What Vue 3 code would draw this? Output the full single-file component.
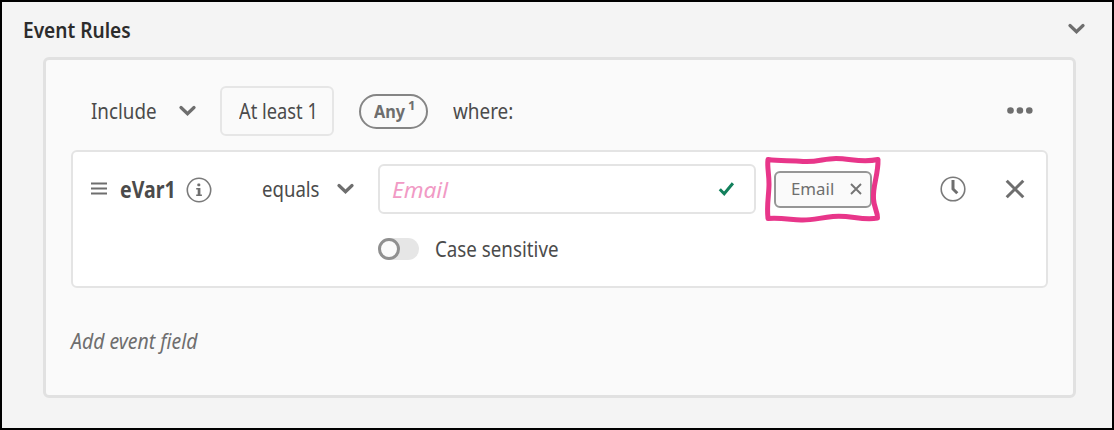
<script setup>
const chevron = 'M2 2.5 L8.5 8.7 L15 2.5'
</script>

<template>
  <section class="rules">
    <header class="head">
      <h1><span class="t t-title">Event Rules</span></h1>
      <svg class="chev" width="17" height="12" viewBox="0 0 17 12"><path :d="chevron" /></svg>
    </header>

    <div class="panel">
      <div class="bar">
        <span class="cell include"><span class="t t-include">Include</span></span>
        <svg class="chev chev-include" width="17" height="12" viewBox="0 0 17 12"><path :d="chevron" /></svg>
        <button class="count"><span class="t t-count">At least 1</span></button>
        <span class="pill"><span class="t t-any">Any</span><span class="sup">1</span></span>
        <span class="cell where"><span class="t t-where">where:</span></span>
        <svg class="more" width="26" height="8" viewBox="0 0 26 8">
          <circle cx="3.5" cy="3.5" r="3.3" /><circle cx="12.9" cy="3.5" r="3.3" /><circle cx="22.3" cy="3.5" r="3.3" />
        </svg>
      </div>

      <div class="card">
        <div class="line">
          <svg class="grip" width="16" height="14" viewBox="0 0 16 14"><path d="M0 1.500H16M0 6.500H16M0 11.500H16" /></svg>
          <span class="cell name"><span class="t t-name">eVar1</span></span>
          <svg class="info" width="26" height="26" viewBox="0 0 26 26">
            <circle class="ring" cx="13" cy="13" r="11.7" />
            <rect x="11.3" y="6.500" width="3" height="2.800" rx="1" />
            <path d="M10.200 11h4.200v6.500h1.500v1.500h-5.700v-1.500h1.500v-5h-1.500z" />
          </svg>
          <span class="cell op"><span class="t t-op">equals</span></span>
          <svg class="chev chev-op" width="17" height="12" viewBox="0 0 17 12"><path :d="chevron" /></svg>
          <div class="field">
            <span class="t t-value">Email</span>
            <svg width="17" height="15" viewBox="0 0 17 15"><path d="M1.8 7.2L6.2 11.7L14.9 1.2" /></svg>
          </div>
          <div class="tagwrap">
            <span class="tag">
              <span class="t t-tag">Email</span>
              <svg width="12" height="12" viewBox="0 0 12 12"><path d="M1 1L11 11M11 1L1 11" /></svg>
            </span>
            <svg class="sketch" width="120" height="72" viewBox="0 0 120 72">
              <path d="M5 6.500C17 8.500 28 7 40 8.500C54 9.500 61 5.500 73 5.500C88 5.500 98 10 115 6.500C115.500 21 109.500 33 110.500 46C111 55 114.500 58 114.500 65C99 68 86 61.500 70 63.500C56 65 48 67.500 38 67C27 66.500 17 64.500 5 65.500C3.500 52 6 42 6 31C6 20 4 14 5 6.500Z" />
            </svg>
          </div>
          <svg class="clock" width="26" height="26" viewBox="0 0 26 26">
            <circle cx="13" cy="13" r="11.8" />
            <path d="M13 4V13L17.300 17.300" />
          </svg>
          <svg class="close" width="20" height="20" viewBox="0 0 20 20"><path d="M1.700 1.700L18.300 18.300M18.300 1.700L1.700 18.300" /></svg>
        </div>
        <div class="option">
          <span class="toggle"><i></i></span>
          <span class="t t-case">Case sensitive</span>
        </div>
      </div>

      <div class="add"><span class="t t-add">Add event field</span></div>
    </div>
  </section>
</template>

<style>
body { margin: 0; }
</style>

<style scoped>
* { box-sizing: border-box; }
.rules {
  width: 1114px; height: 430px;
  padding: 0 36px 0 41px;
  border: 2px solid #000;
  background: #f4f4f4;
  color: #4b4b4b;
  font: 21px/28px "Noto Sans", "Open Sans", sans-serif;
}
svg { display: block; flex: none; fill: none; }
.t { display: inline-block; white-space: nowrap; transform-origin: 0 50%; }
.cell { flex: none; white-space: nowrap; }
.head { display: flex; justify-content: space-between; height: 55px; padding-top: 14px; margin-left: -20px; margin-right: -9px; }
h1 { margin: 0; font: inherit; font-weight: 600; color: #2c2c2c; }
.chev path { stroke: #6e6e6e; stroke-width: 3.2; stroke-linecap: round; stroke-linejoin: miter; }
.head .chev { margin-top: 7px; }
.panel { width: 1033px; height: 341px; padding: 0 25px; border: 3px solid #e1e1e1; border-radius: 6px; background: #fafafa; }
.bar { display: flex; align-items: center; height: 90px; padding: 12px 15px 0 20px; }
.include { width: 88px; }
.count { flex: none; width: 114px; height: 50px; margin-left: 24px; padding: 0 0 0 17px; border: 2px solid #e6e6e6; border-radius: 6px; background: #fafafa; color: inherit; font: inherit; text-align: left; }
.pill { display: flex; flex: none; width: 69px; height: 35px; margin-left: 25px; padding-left: 13px; border: 2px solid #858585; border-radius: 18px; color: #6e6e6e; font-weight: 700; font-size: 18px; }
.pill .t { width: 34px; line-height: 31px; }
.sup { font-size: 13px; line-height: 19px; }
.where { margin-left: 25px; }
.more { margin-left: auto; fill: #6e6e6e; }
.card { width: 977px; height: 138px; border: 2px solid #e4e4e4; border-radius: 6px; background: #fff; }
.line { display: flex; align-items: center; height: 74px; padding: 0 20px 0 18px; }
.grip path { stroke: #6e6e6e; stroke-width: 1.8; }
.name { width: 66px; margin-left: 13px; font-size: 23px; font-weight: 700; }
.info { fill: #6e6e6e; position: relative; top: 1px; }
.info .ring { fill: none; stroke: #7a7a7a; stroke-width: 1.6; }
.op { width: 75px; margin-left: 50px; }
.field { display: flex; flex: none; align-items: center; justify-content: space-between; width: 378px; height: 50px; margin-left: 24px; padding: 0 19px 0 12px; border: 2px solid #e4e4e4; border-radius: 6px; }
.field path { stroke: #12805c; stroke-width: 3; }
.tagwrap { position: relative; flex: none; margin-left: 18px; }
.tag { display: flex; align-items: center; justify-content: space-between; width: 98px; height: 37px; padding: 0 8px 0 15px; border: 2px solid #969696; border-radius: 6px; background: #fafafa; color: #6e6e6e; font-size: 17px; }
.tag path { stroke: #747474; stroke-width: 1.9; }
.sketch { position: absolute; left: -11px; top: -18px; }
.sketch path { stroke: #e8368a; stroke-width: 5; stroke-linejoin: round; }
.clock { margin-left: auto; }
.clock circle { stroke: #7a7a7a; stroke-width: 1.6; }
.clock path { stroke: #6e6e6e; stroke-width: 3; }
.close { margin-left: 39px; margin-right: 1px; }
.close path { stroke: #6e6e6e; stroke-width: 3; }
.option { display: flex; align-items: center; height: 46px; padding-left: 305px; }
.toggle { width: 41px; height: 22px; margin-right: 16px; border-radius: 11px; background: #e6e6e6; }
.toggle i { display: block; width: 22px; height: 22px; border: 3px solid #8f8f8f; border-radius: 50%; background: #fafafa; }
.add { padding-top: 39px; font-style: italic; color: #6e6e6e; }
.t-title { transform: scaleX(.91); }
.t-include { transform: scaleX(.895); }
.t-count { transform: scaleX(.87); }
.t-any { transform: scaleX(.9); }
.t-where { transform: scaleX(.9); }
.t-name { transform: scaleX(.85); }
.t-op { transform: scaleX(.885); }
.t-value { font-size: 22px; font-style: italic; color: #f19ac5; transform: scaleX(1.03); }
.t-tag { transform: scaleX(.99); }
.t-case { transform: scaleX(.893); }
.t-add { transform: scaleX(.925); }
</style>
